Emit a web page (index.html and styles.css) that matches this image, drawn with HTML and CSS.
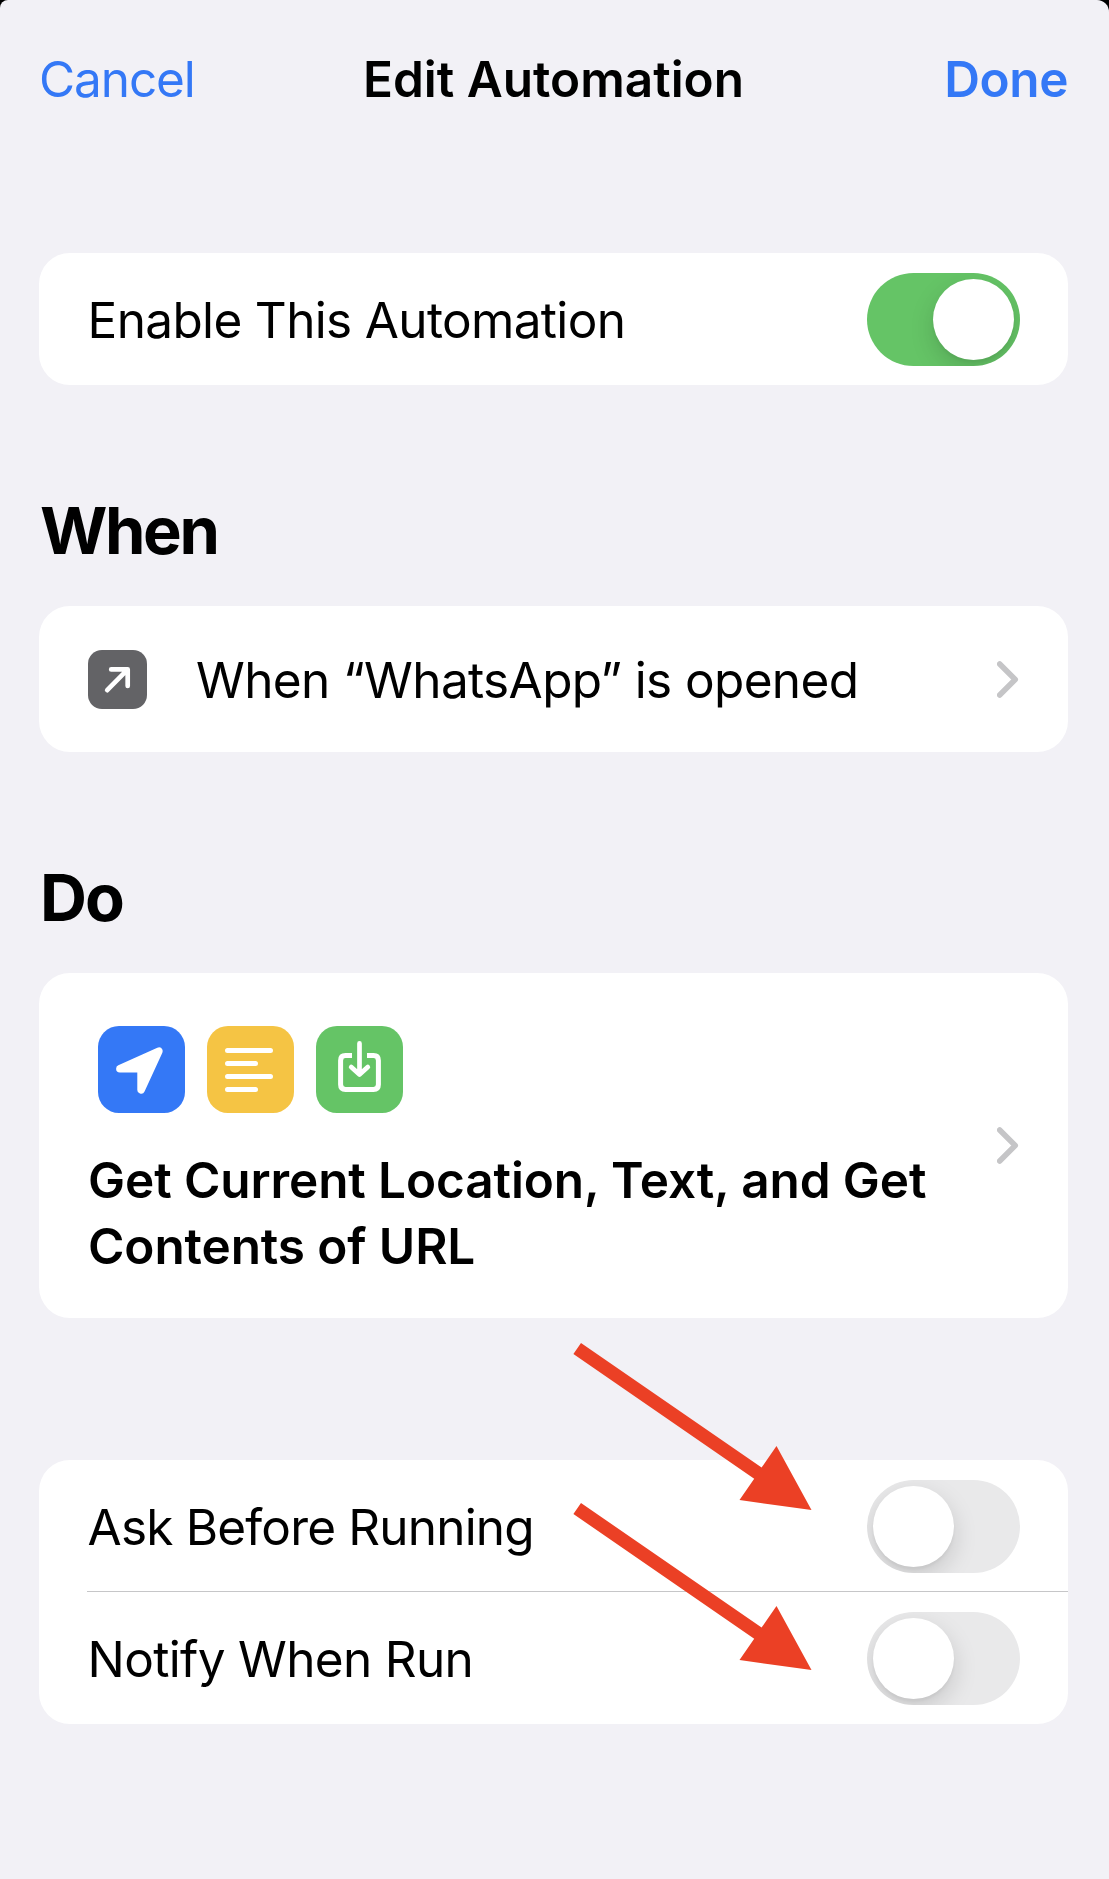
FILE: index.html
```html
<!DOCTYPE html>
<html lang="en">
<head>
<meta charset="utf-8">
<title>Edit Automation</title>
<link rel="stylesheet" href="styles.css">
</head>
<body>
<div class="sheet">
  <header class="navbar">
    <a class="nav-cancel">Cancel</a>
    <h1 class="nav-title">Edit Automation</h1>
    <a class="nav-done">Done</a>
  </header>

  <main class="content">
    <section class="card">
      <div class="switch-row">
        <span class="label label-enable">Enable This Automation</span>
        <span class="switch switch-on"><span class="knob"></span></span>
      </div>
    </section>

    <h2 class="heading heading-when">When</h2>
    <section class="card trigger">
      <svg class="trigger-icon" viewBox="0 0 59 59">
        <rect width="59" height="59" rx="14" fill="#636366"/>
        <path d="M19.2 40.2 39 20.2M23.2 19.4H39.7V36" fill="none" stroke="#fff" stroke-width="4.7" stroke-linecap="round" stroke-linejoin="round"/>
      </svg>
      <span class="label label-trigger">When “WhatsApp” is opened</span>
      <svg class="chevron" viewBox="0 0 22 37"><path d="M2.7 3 18.2 18.5 2.7 34"/></svg>
    </section>

    <h2 class="heading heading-do">Do</h2>
    <section class="card actions">
      <div class="actions-body">
        <div class="action-icons">
          <svg class="action-icon" viewBox="0 0 87 87">
            <rect width="87" height="87" rx="21" fill="#3478f6"/>
            <path d="M21.9 42.8 60.9 25.1 43.1 63.9V42.8Z" fill="#fff" stroke="#fff" stroke-width="7.6" stroke-linejoin="round"/>
          </svg>
          <svg class="action-icon" viewBox="0 0 87 87">
            <rect width="87" height="87" rx="21" fill="#f5c444"/>
            <path d="M20.5 24.4H63.5M20.5 37.4H48.5M20.5 50.4H63.5M20.5 63.4H48.5" stroke="#fff" stroke-width="5" stroke-linecap="round"/>
          </svg>
          <svg class="action-icon" viewBox="0 0 87 87">
            <rect width="87" height="87" rx="21" fill="#65c466"/>
            <g fill="none" stroke="#fff" stroke-width="5">
              <path d="M36 29.6H29.5Q24.6 29.6 24.6 34.5V58.6Q24.6 63.5 29.5 63.5H57.5Q62.4 63.5 62.4 58.6V34.5Q62.4 29.6 57.5 29.6H51"/>
              <path d="M43.5 17.4V48.3M35.2 41 43.5 48.6 51.8 41" stroke-width="4.7" stroke-linecap="round" stroke-linejoin="round"/>
            </g>
          </svg>
        </div>
        <p class="summary">Get Current Location, Text, and Get<br>Contents of URL</p>
      </div>
      <svg class="chevron" viewBox="0 0 22 37"><path d="M2.7 3 18.2 18.5 2.7 34"/></svg>
    </section>

    <section class="card options">
      <div class="switch-row divided">
        <span class="label label-ask">Ask Before Running</span>
        <span class="switch"><span class="knob"></span></span>
      </div>
      <div class="switch-row">
        <span class="label label-notify">Notify When Run</span>
        <span class="switch"><span class="knob"></span></span>
      </div>
      <svg class="arrow arrow-ask" viewBox="0 0 240 168"><path d="M8 0 188.6 124.5 203.5 103 238.5 167 166.5 157 181.2 135.8 .4 11Z"/></svg>
      <svg class="arrow arrow-notify" viewBox="0 0 240 168"><path d="M8 0 188.6 124.5 203.5 103 238.5 167 166.5 157 181.2 135.8 .4 11Z"/></svg>
    </section>
  </main>
</div>
</body>
</html>
```
FILE: styles.css
```css
* {
  box-sizing: border-box;
}

body {
  margin: 0;
  background: #000;
  color: #000;
  font-family: Inter, "Liberation Sans", sans-serif;
  font-size: 49.5px;
  line-height: 60px;
}

h1, h2, p {
  margin: 0;
  font-size: inherit;
}

svg {
  display: block;
  flex: none;
}

.sheet {
  height: 1879px;
  overflow: hidden;
  background: #f2f1f6;
  border-radius: 8px 12px 0 0;
}

/* Navigation bar */
.navbar {
  display: grid;
  grid-template-columns: 1fr auto 1fr;
  align-items: center;
  height: 158px;
  padding: 0 41px 0 39px;
  white-space: nowrap;
}

.nav-cancel {
  color: #3478f6;
  letter-spacing: -1.1px;
}

.nav-title {
  font-weight: 600;
}

.nav-done {
  justify-self: end;
  color: #3478f6;
  font-weight: 600;
  letter-spacing: -0.4px;
}

/* Cards */
.content {
  padding: 95px 41px 0 39px;
}

.card {
  background: #fff;
  border-radius: 31px;
}

.heading {
  margin: 106px 0 36px 1px;
  font-size: 65px;
  font-weight: 700;
  line-height: 79px;
}

.heading-when {
  letter-spacing: -2.4px;
}

.heading-do {
  letter-spacing: -2px;
}

.label {
  white-space: nowrap;
}

.label-enable {
  letter-spacing: -0.66px;
}

.label-ask {
  letter-spacing: -0.82px;
}

.label-notify {
  letter-spacing: -0.68px;
}

.switch-row {
  display: flex;
  justify-content: space-between;
  align-items: flex-start;
  height: 132px;
  margin-left: 48px;
  padding: 20px 48px 0 0.6px;
  line-height: 94px;
}

.divided {
  border-bottom: 1px solid #c6c6c8;
}

/* Switch */
.switch {
  display: flex;
  width: 153px;
  height: 93px;
  padding: 6px;
  overflow: hidden;
  border-radius: 47px;
  background: #e9e9ea;
}

.knob {
  width: 81px;
  height: 81px;
  border-radius: 50%;
  background: #fff;
  box-shadow: 0 9px 24px rgba(0, 0, 0, 0.15), 0 3px 3px rgba(0, 0, 0, 0.04);
}

.switch-on {
  justify-content: flex-end;
  background: #65c466;
}

/* Trigger */
.trigger {
  display: flex;
  align-items: center;
  height: 146px;
  padding: 0 49px;
}

.trigger-icon {
  width: 59px;
  height: 59px;
}

.label-trigger {
  flex: 1;
  padding: 2px 0 0 49px;
  letter-spacing: -0.63px;
}

.chevron {
  width: 22px;
  height: 37px;
  fill: none;
  stroke: #c5c5c7;
  stroke-width: 5.6px;
  stroke-linecap: round;
  stroke-linejoin: round;
}

/* Actions */
.actions {
  display: flex;
  justify-content: space-between;
  align-items: center;
  height: 345px;
  padding: 0 49px;
}

.actions-body {
  padding: 14px 0 0;
}

.action-icons {
  display: flex;
  gap: 22px;
  margin: 0 0 34px 10px;
}

.action-icon {
  width: 87px;
  height: 87px;
}

.summary {
  font-weight: 600;
  line-height: 66px;
  letter-spacing: -0.1px;
  white-space: nowrap;
}

/* Options, with the annotation arrows laid over them */
.options {
  position: relative;
  margin-top: 142px;
}

.arrow {
  position: absolute;
  left: 534px;
  width: 240px;
  height: 168px;
  fill: #eb4025;
}

.arrow-ask {
  top: -117px;
}

.arrow-notify {
  top: 43px;
}
```
